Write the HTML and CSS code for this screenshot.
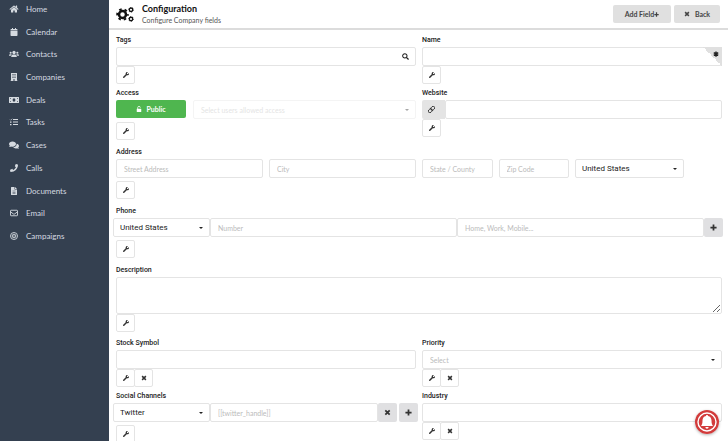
FILE: index.html
```html
<!DOCTYPE html>
<html lang="en">
<head>
    <meta charset="UTF-8">
    <meta name="viewport" content="width=device-width, initial-scale=1.0">
    <title>Configuration</title>
    <link rel="stylesheet" href="styles.css">
</head>
<body>
    <!-- icon sprite -->
    <svg class="sprite" aria-hidden="true">
        <symbol id="home" viewBox="0 0 576 512"><path d="M280.37 148.26L96 300.11V464a16 16 0 0 0 16 16l112.06-.29a16 16 0 0 0 15.92-16V368a16 16 0 0 1 16-16h64a16 16 0 0 1 16 16v95.64a16 16 0 0 0 16 16.05L464 480a16 16 0 0 0 16-16V300L295.67 148.26a12.19 12.19 0 0 0-15.3 0zM571.6 251.47L488 182.56V44.05a12 12 0 0 0-12-12h-56a12 12 0 0 0-12 12v72.61L318.47 43a48 48 0 0 0-61 0L4.34 251.47a12 12 0 0 0-1.6 16.9l25.5 31A12 12 0 0 0 45.15 301l235.22-193.74a12.19 12.19 0 0 1 15.3 0L530.9 301a12 12 0 0 0 16.9-1.6l25.5-31a12 12 0 0 0-1.7-16.93z"/></symbol>
        <symbol id="calendar" viewBox="0 0 16 16"><path d="M2.500 2H4V0h2v2h4V0h2v2h1.500Q15 2 15 3.500V5H1V3.500Q1 2 2.500 2zM1 6h14v8.500q0 1.500-1.500 1.500h-11Q1 16 1 14.500z"/></symbol>
        <symbol id="users" viewBox="0 0 20 16"><circle cx="10" cy="5" r="3.300"/><circle cx="3.300" cy="5.500" r="2.100"/><circle cx="16.700" cy="5.500" r="2.100"/><path d="M4.500 14v-1.500Q4.500 9 8 9h4q3.500 0 3.500 3.500V14zM0 11.500v-1Q0 8.300 2.200 8.300h2.600q.7 0 1 .3Q3.800 9.800 3.600 11.500zM20 11.500v-1q0-2.200-2.200-2.200h-2.600q-.7 0-1 .3 2 1.200 2.200 2.900z"/></symbol>
        <symbol id="building" viewBox="0 0 16 16"><path fill-rule="evenodd" d="M2 0h12v15h1v1H9v-4H7v4H1v-1h1zM5 2v2h2V2zM9 2v2h2V2zM5 5v2h2V5zM9 5v2h2V5zM5 8v2h2V8zM9 8v2h2V8z"/></symbol>
        <symbol id="money" viewBox="0 0 20 16"><path fill-rule="evenodd" d="M1 2h18q1 0 1 1v10q0 1-1 1H1q-1 0-1-1V3q0-1 1-1zM10 4.500a2.800 3.500 0 0 0 0 7a2.800 3.500 0 0 0 0-7zM2 6q1.700 0 1.700-2H2zM18 6V4h-1.700q0 2 1.700 2zM2 10v2h1.700q0-2-1.700-2zM18 10q-1.700 0-1.700 2H18z"/></symbol>
        <symbol id="tasks" viewBox="0 0 16 16"><path d="M6 2h10v2H6zM6 7h10v2H6zM6 12h10v2H6zM0 7h3v2.500H0zM0 12h3v2.500H0z"/><path d="M0 3l1.500 1.500L4.500 1.500" fill="none" stroke="currentColor" stroke-width="1.300"/></symbol>
        <symbol id="comments" viewBox="0 0 20 16"><path d="M7 1c4 0 7 2.300 7 5.200s-3 5.200-7 5.200q-1.600 0-3-.5-1.600 1.100-4 1.100 1.300-1.300 1.600-2.700Q0 8 0 6.200C0 3.300 3 1 7 1z"/><path d="M15.300 5.500C18 6 20 7.800 20 10q0 1.600-1.500 2.900.4 1.300 1.500 2.500-2.200 0-3.700-1-1.300.4-2.700.4-3.600 0-5.500-2.200c4.200-.1 7.600-2.800 7.200-7.100z"/></symbol>
        <symbol id="phone" viewBox="0 0 512 512"><path d="M493.400 24.600l-104-24c-11.300-2.600-22.900 3.300-27.500 13.900l-48 112c-4.200 9.800-1.400 21.300 6.900 28l60.600 49.600c-36 76.700-98.900 140.500-177.200 177.200l-49.600-60.600c-6.800-8.300-18.200-11.100-28-6.900l-112 48C3.900 366.500-2 378.100.6 389.400l24 104C27.100 504.200 36.700 512 48 512c256.100 0 464-207.500 464-464 0-11.200-7.700-20.900-18.600-23.400z"/></symbol>
        <symbol id="file" viewBox="0 0 16 16"><path fill-rule="evenodd" d="M2 1q0-1 1-1h6v5h5v10q0 1-1 1H3q-1 0-1-1zM5 7.500v1h6v-1zM5 10v1h6v-1zM5 12.500v1h6v-1zM10 0l4 4h-4z"/></symbol>
        <symbol id="mail" viewBox="0 0 16 16"><g fill="none" stroke="currentColor" stroke-width="1.800"><rect x="1" y="2.500" width="14" height="11" rx="1.200"/><path d="M1 5.500l5.500 4.300q1.500 1.200 3 0L15 5.500"/></g></symbol>
        <symbol id="target" viewBox="0 0 16 16"><g fill="none" stroke="currentColor" stroke-width="1.800"><circle cx="8" cy="8" r="7"/><circle cx="8" cy="8" r="3.600"/></g><circle cx="8" cy="8" r="1.300"/></symbol>
        <symbol id="wrench" viewBox="0 0 512 512"><path d="M507.730 109.100c-2.240-9.030-13.540-12.090-20.120-5.510l-74.360 74.360-67.880-11.310-11.310-67.880 74.360-74.360c6.620-6.620 3.430-17.900-5.660-20.160-47.380-11.740-99.550.91-136.580 37.930-39.640 39.640-50.550 97.100-34.050 147.200L18.740 402.760c-24.990 24.990-24.990 65.510 0 90.500 24.990 24.990 65.510 24.990 90.500 0l213.210-213.210c50.120 16.710 107.470 5.680 147.370-34.220 37.070-37.070 49.700-89.320 37.910-136.730z"/></symbol>
        <symbol id="cogs" viewBox="0 0 36 30"><g fill="none" stroke="currentColor"><circle cx="13" cy="15" r="7" stroke-width="5"/><circle cx="13" cy="15" r="10.500" stroke-width="4" stroke-dasharray="5 5.996" stroke-dashoffset="2.500"/><circle cx="30" cy="5.500" r="3.500" stroke-width="2.600"/><circle cx="30" cy="5.500" r="5" stroke-width="1.400" stroke-dasharray="2 3.236"/><circle cx="30" cy="24" r="3.500" stroke-width="2.600"/><circle cx="30" cy="24" r="5" stroke-width="1.400" stroke-dasharray="2 3.236"/></g></symbol>
        <symbol id="search" viewBox="0 0 16 16"><g fill="none" stroke="currentColor" stroke-width="2.400"><circle cx="6.500" cy="6.500" r="5"/><path d="M10 10l5 5" stroke-width="3"/></g></symbol>
        <symbol id="times" viewBox="0 0 16 16"><path d="M3 3l10 10M13 3L3 13" stroke="currentColor" stroke-width="4"/></symbol>
        <symbol id="plus" viewBox="0 0 16 16"><path d="M8 1v14M1 8h14" stroke="currentColor" stroke-width="4"/></symbol>
        <symbol id="unlock" viewBox="0 0 16 16"><path d="M3 7h10q1 0 1 1v7q0 1-1 1H3q-1 0-1-1V8q0-1 1-1z"/><path d="M4.500 8V4.500a3.500 3.500 0 0 1 7 0" fill="none" stroke="currentColor" stroke-width="2"/></symbol>
        <symbol id="link" viewBox="0 0 16 16"><g fill="none" stroke="currentColor" stroke-width="2" transform="rotate(-45 8 8)"><rect x="-1" y="4.500" width="10" height="7" rx="3.500"/><rect x="7" y="4.500" width="10" height="7" rx="3.500"/></g></symbol>
        <symbol id="caret" viewBox="0 0 8 8"><path d="M0 2h8L4 6z"/></symbol>
        <symbol id="asterisk" viewBox="0 0 16 16"><path d="M8 1v14M2 4.500l12 7M14 4.500l-12 7" stroke="currentColor" stroke-width="3.800"/></symbol>
        <symbol id="bell" viewBox="0 0 24 24"><circle cx="12" cy="12" r="12" fill="#d23b3b"/><circle cx="12" cy="12" r="9" fill="none" stroke="#fff" stroke-width="1.400"/><path fill="#fff" d="M12 5c.7 0 1 .4 1 1 2.300.5 3.500 2.200 3.500 4.500 0 3 .5 4 1.500 5.500H6c1-1.500 1.500-2.500 1.500-5.500C7.500 8.200 8.700 6.500 11 6c0-.6.3-1 1-1zM10.300 17h3.400q-.3 1.700-1.700 1.700T10.300 17z"/></symbol>
    </svg>

    <nav class="sidebar">
        <ul class="menu">
            <li><a href="#"><svg><use href="#home"/></svg>Home</a></li>
            <li><a href="#"><svg><use href="#calendar"/></svg>Calendar</a></li>
            <li><a href="#"><svg><use href="#users"/></svg>Contacts</a></li>
            <li><a href="#"><svg><use href="#building"/></svg>Companies</a></li>
            <li><a href="#"><svg><use href="#money"/></svg>Deals</a></li>
            <li><a href="#"><svg><use href="#tasks"/></svg>Tasks</a></li>
            <li><a href="#"><svg><use href="#comments"/></svg>Cases</a></li>
            <li><a href="#"><svg><use href="#phone"/></svg>Calls</a></li>
            <li><a href="#"><svg><use href="#file"/></svg>Documents</a></li>
            <li><a href="#"><svg><use href="#mail"/></svg>Email</a></li>
            <li><a href="#"><svg><use href="#target"/></svg>Campaigns</a></li>
        </ul>
    </nav>

    <main class="main">
        <header class="header">
            <svg class="header-icon"><use href="#cogs"/></svg>
            <div class="header-text">
                <h1>Configuration</h1>
                <p>Configure Company fields</p>
            </div>
            <button type="button" class="btn">Add Field<svg><use href="#plus"/></svg></button>
            <button type="button" class="btn btn-back"><svg><use href="#times"/></svg>Back</button>
        </header>

        <form class="form">
            <div class="row">
                <div class="field">
                    <label for="tags">Tags</label>
                    <div class="control">
                        <input type="text" id="tags">
                        <svg class="search"><use href="#search"/></svg>
                    </div>
                    <div class="tools"><button type="button" aria-label="Edit tags"><svg><use href="#wrench"/></svg></button></div>
                </div>
                <div class="field">
                    <label for="name">Name</label>
                    <div class="control">
                        <input type="text" id="name" required>
                        <span class="corner"><svg><use href="#asterisk"/></svg></span>
                    </div>
                    <div class="tools"><button type="button" aria-label="Edit name"><svg><use href="#wrench"/></svg></button></div>
                </div>
            </div>

            <div class="row">
                <div class="field spaced">
                    <label for="access">Access</label>
                    <div class="access">
                        <button type="button" class="btn-public"><svg><use href="#unlock"/></svg>Public</button>
                        <div class="control disabled">
                            <select id="access" class="empty" disabled><option>Select users allowed access</option></select>
                            <svg class="caret"><use href="#caret"/></svg>
                        </div>
                    </div>
                    <div class="tools"><button type="button" aria-label="Edit access"><svg><use href="#wrench"/></svg></button></div>
                </div>
                <div class="field">
                    <label for="website">Website</label>
                    <div class="joined-website">
                        <span class="addon"><svg><use href="#link"/></svg></span>
                        <input type="text" id="website">
                    </div>
                    <div class="tools"><button type="button" aria-label="Edit website"><svg><use href="#wrench"/></svg></button></div>
                </div>
            </div>

            <div class="field spaced">
                <label for="street">Address</label>
                <div class="address">
                    <input type="text" id="street" class="wide" placeholder="Street Address">
                    <input type="text" class="wide" placeholder="City" aria-label="City">
                    <input type="text" placeholder="State / County" aria-label="State / County">
                    <input type="text" placeholder="Zip Code" aria-label="Zip Code">
                    <div class="control country">
                        <select aria-label="Country"><option>United States</option></select>
                        <svg class="caret"><use href="#caret"/></svg>
                    </div>
                </div>
                <div class="tools"><button type="button" aria-label="Edit address"><svg><use href="#wrench"/></svg></button></div>
            </div>

            <div class="field spaced">
                <label for="phoneNumber">Phone</label>
                <div class="joined">
                    <div class="control">
                        <select aria-label="Phone country"><option>United States</option></select>
                        <svg class="caret"><use href="#caret"/></svg>
                    </div>
                    <input type="text" id="phoneNumber" placeholder="Number">
                    <input type="text" placeholder="Home, Work, Mobile..." aria-label="Phone type">
                    <button type="button" class="btn-gray" aria-label="Add phone"><svg><use href="#plus"/></svg></button>
                </div>
                <div class="tools"><button type="button" aria-label="Edit phone"><svg><use href="#wrench"/></svg></button></div>
            </div>

            <div class="field description">
                <label for="description">Description</label>
                <textarea id="description"></textarea>
                <div class="tools"><button type="button" aria-label="Edit description"><svg><use href="#wrench"/></svg></button></div>
            </div>

            <div class="row">
                <div class="field">
                    <label for="stock">Stock Symbol</label>
                    <input type="text" id="stock">
                    <div class="tools">
                        <button type="button" aria-label="Edit stock symbol"><svg><use href="#wrench"/></svg></button>
                        <button type="button" aria-label="Remove stock symbol"><svg><use href="#times"/></svg></button>
                    </div>
                </div>
                <div class="field">
                    <label for="priority">Priority</label>
                    <div class="control">
                        <select id="priority" class="empty"><option>Select</option></select>
                        <svg class="caret"><use href="#caret"/></svg>
                    </div>
                    <div class="tools">
                        <button type="button" aria-label="Edit priority"><svg><use href="#wrench"/></svg></button>
                        <button type="button" aria-label="Remove priority"><svg><use href="#times"/></svg></button>
                    </div>
                </div>
            </div>

            <div class="row">
                <div class="field spaced">
                    <label for="social">Social Channels</label>
                    <div class="joined joined-social">
                        <div class="control">
                            <select id="social"><option>Twitter</option></select>
                            <svg class="caret"><use href="#caret"/></svg>
                        </div>
                        <input type="text" placeholder="[[twitter_handle]]" aria-label="Handle">
                        <button type="button" class="btn-gray" aria-label="Remove channel"><svg><use href="#times"/></svg></button>
                        <button type="button" class="btn-gray" aria-label="Add channel"><svg><use href="#plus"/></svg></button>
                    </div>
                    <div class="tools"><button type="button" aria-label="Edit social channels"><svg><use href="#wrench"/></svg></button></div>
                </div>
                <div class="field">
                    <label for="industry">Industry</label>
                    <input type="text" id="industry">
                    <div class="tools">
                        <button type="button" aria-label="Edit industry"><svg><use href="#wrench"/></svg></button>
                        <button type="button" aria-label="Remove industry"><svg><use href="#times"/></svg></button>
                    </div>
                </div>
            </div>
        </form>
    </main>

    <button type="button" class="notify" aria-label="Notifications"><svg><use href="#bell"/></svg></button>
</body>
</html>
```
FILE: styles.css
```css
* {
    box-sizing: border-box;
}

body {
    margin: 0;
    height: 100vh;
    display: flex;
    overflow: hidden;
    background-color: #fff;
    color: #222;
    font-family: Lato, sans-serif;
    font-size: 7px;
}

button, input, select, textarea {
    font: inherit;
    color: inherit;
    margin: 0;
}

button {
    display: flex;
    align-items: center;
    justify-content: center;
    padding: 0;
    border: none;
    cursor: pointer;
}

svg {
    display: block;
    width: 7px;
    height: 7px;
    flex-shrink: 0;
    fill: currentColor;
}

.sprite {
    display: none;
}

/* Sidebar */
.sidebar {
    width: 109px;
    flex-shrink: 0;
    background-color: #344050;
}

.menu {
    display: flex;
    flex-direction: column;
    justify-content: space-between;
    height: 245px;
    margin: 0;
    padding: 0;
    list-style: none;
}

.menu a {
    display: flex;
    align-items: center;
    gap: 7px;
    height: 18px;
    padding-left: 9px;
    color: #d5dae0;
    font-size: 8px;
    text-decoration: none;
}

.menu svg {
    width: 10px;
    height: 8px;
}

/* Header */
.main {
    flex: 1;
    min-width: 0;
    overflow: hidden;
}

.header {
    display: flex;
    align-items: center;
    gap: 3px;
    height: 30px;
    padding: 0 8px 0 7px;
    border-bottom: 2px solid #dcdcdc;
}

.header-icon {
    width: 18px;
    height: 15px;
    color: #111;
}

.header-text {
    flex: 1;
    padding-left: 5px;
}

.header h1 {
    margin: 0;
    font-size: 9px;
    line-height: 12px;
    color: #111;
}

.header p {
    margin: 0;
    font-size: 7px;
    line-height: 10px;
    color: #555;
}

.btn {
    width: 58px;
    height: 18px;
    border-radius: 2px;
    background-color: #e0e0e0;
    color: #444;
    font-weight: bold;
}

.btn svg {
    width: 5px;
    height: 5px;
}

.btn-back {
    width: 46px;
    gap: 5px;
}

.btn-back svg {
    width: 6px;
    height: 6px;
}

/* Form */
.form {
    padding: 5px 6px 0 7px;
}

.row {
    display: grid;
    grid-template-columns: 1fr 1fr;
    gap: 6px;
}

.field {
    padding-bottom: 4px;
}

.field label {
    display: block;
    margin-bottom: 2px;
    font-family: Roboto, sans-serif;
    font-weight: 500;
    line-height: 10px;
}

input, select, textarea {
    display: block;
    width: 100%;
    min-width: 0;
    height: 19px;
    padding: 0 7px;
    border: 1px solid #e4e4e4;
    border-radius: 2px;
    background-color: #fff;
    outline: none;
}

select {
    appearance: none;
    font-family: Roboto, sans-serif;
}

/* the country and channel pickers read a size larger than the placeholders */
.joined select, .country select {
    font-size: 8px;
    line-height: 10px;
    padding: 0 6px;
}

::placeholder {
    color: #bbb;
    opacity: 1;
}

.empty {
    color: #bbb;
    font-family: Lato, sans-serif;
}

textarea {
    height: 37px;
    resize: vertical;
}

/* Icons share the grid cell of their input */
.control {
    display: grid;
    align-items: center;
}

.control > * {
    grid-area: 1 / 1;
}

.control svg {
    pointer-events: none;
}

.control .caret {
    justify-self: end;
    width: 4px;
    height: 4px;
    margin-right: 7px;
}

.search {
    justify-self: end;
    margin-right: 7px;
}

.corner {
    align-self: start;
    justify-self: end;
    display: flex;
    justify-content: flex-end;
    width: 19px;
    height: 19px;
    padding: 4px 3px 0 0;
    background: linear-gradient(45deg, transparent 50%, #e0e0e0 50%);
}

.corner svg {
    width: 6px;
    height: 6px;
}

.tools {
    display: flex;
}

.tools button {
    width: 19px;
    height: 18px;
    border: 1px solid #e4e4e4;
    border-radius: 2px;
    background-color: #fff;
    color: #333;
}

.tools button + button {
    margin-left: -1px;
}

.tools svg {
    width: 6px;
    height: 6px;
}

.spaced {
    padding-bottom: 7px;
}

.spaced .tools {
    margin-top: 3px;
}

.access {
    display: flex;
    gap: 7px;
}

.access .control {
    flex: 1;
}

.btn-public {
    gap: 4px;
    width: 70px;
    height: 18px;
    border-radius: 2px;
    background-color: #4fb64f;
    color: #fff;
    font-weight: bold;
}

.btn-public svg {
    width: 6px;
    height: 6px;
}

.disabled {
    opacity: 0.4;
}

.disabled select {
    opacity: 1;
}

.joined-website {
    display: flex;
}

.addon {
    display: flex;
    align-items: center;
    justify-content: center;
    width: 23px;
    flex-shrink: 0;
    padding-right: 4px;
    border-radius: 2px 0 0 2px;
    background-color: #e4e4e4;
}

.address {
    display: grid;
    grid-template-columns: repeat(16, 1fr);
    gap: 6px;
}

.address input {
    grid-column: span 2;
}

.address .wide {
    grid-column: span 4;
}

.address .country {
    grid-column: span 3;
}

.joined {
    display: flex;
    margin: 0 -1px 0 -3px;
}

.joined .control {
    width: 97px;
    flex-shrink: 0;
}

.joined input {
    flex: 1;
}

.btn-gray {
    width: 19px;
    height: 19px;
    flex-shrink: 0;
    border-radius: 2px;
    background-color: #e0e0e2;
    color: #333;
}

.joined-social {
    margin-right: -2px;
}

.joined-social .btn-gray + .btn-gray {
    margin-left: 2px;
}

.description {
    padding-bottom: 6px;
}

/* Notification bell */
.notify {
    position: fixed;
    right: 9px;
    bottom: 7px;
    border-radius: 50%;
    background: none;
    box-shadow: 0 1px 3px rgba(0, 0, 0, 0.3);
}

.notify svg {
    width: 24px;
    height: 24px;
}
```
